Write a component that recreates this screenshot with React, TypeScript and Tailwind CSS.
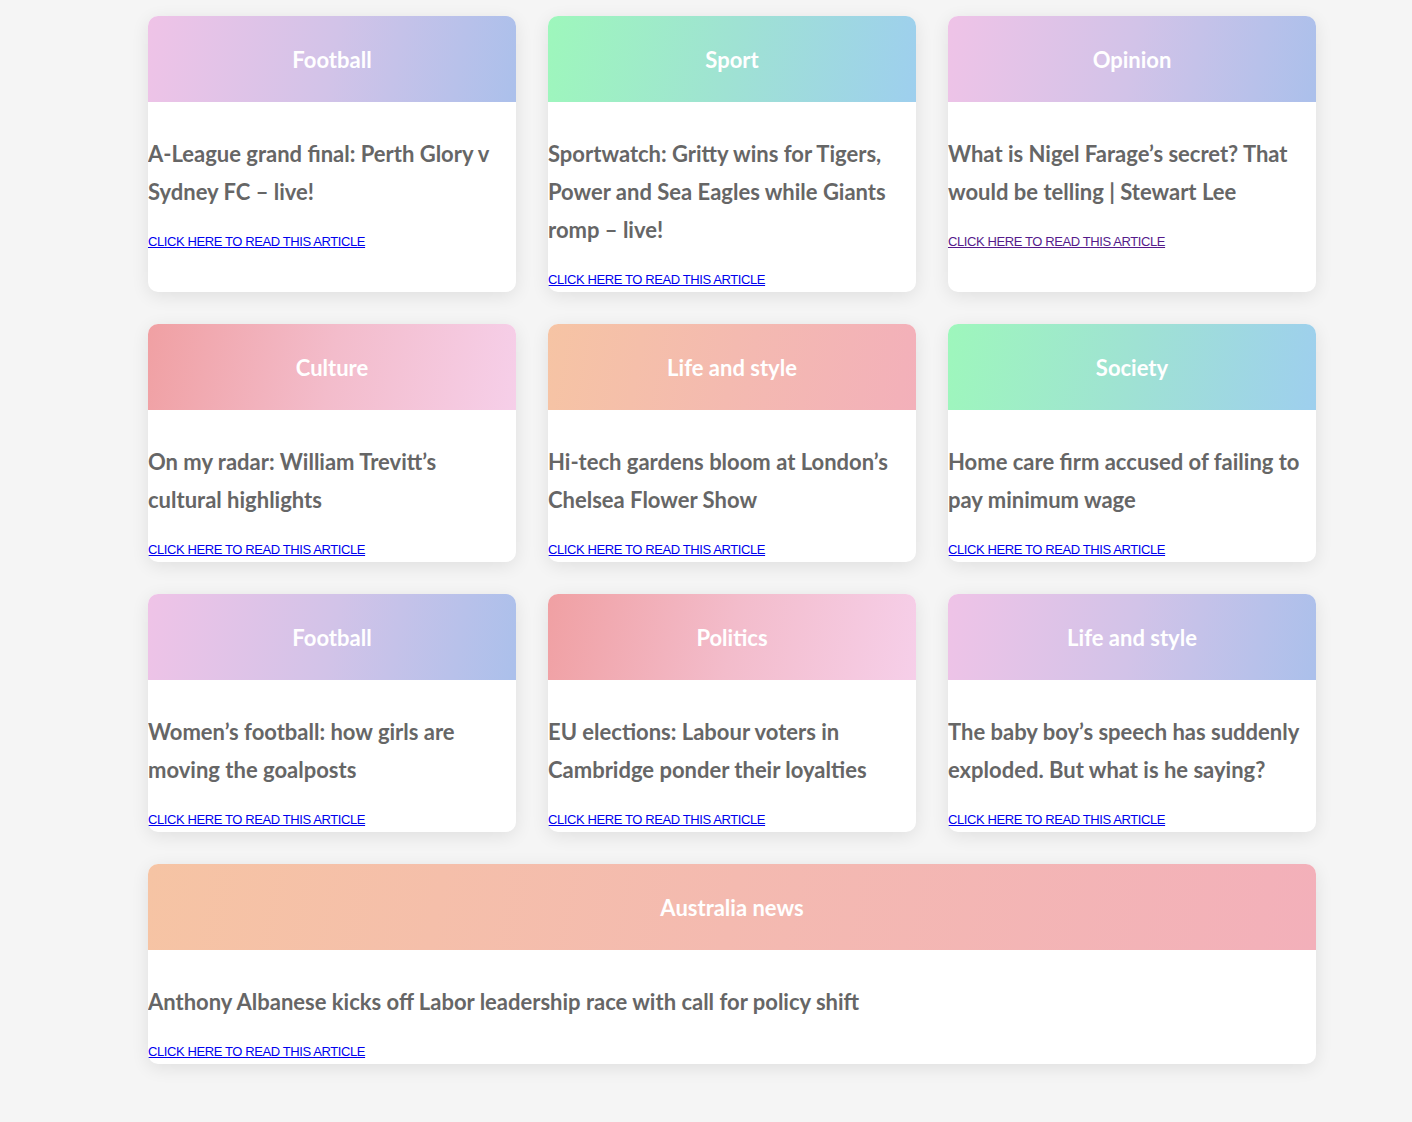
import React from 'react';

type Article = {
  section: string;
  title: string;
  gradient: string;
  visited?: boolean;
  wide?: boolean;
};

const pinkBlue = 'bg-[linear-gradient(100deg,#efc3e7_0%,#d2c3e8_50%,#abc0eb_100%)]';
const greenBlue = 'bg-[linear-gradient(100deg,#9ef7bc_0%,#9fe2d3_50%,#9ecfee_100%)]';
const redPink = 'bg-[linear-gradient(100deg,#f0a0a3_0%,#f3bccb_50%,#f6cfe9_100%)]';
const peachPink = 'bg-[linear-gradient(100deg,#f6c4a4_0%,#f4bab0_50%,#f3b0ba_100%)]';

const articles: Article[] = [
  { section: 'Football', title: 'A-League grand final: Perth Glory v Sydney FC – live!', gradient: pinkBlue },
  {
    section: 'Sport',
    title: 'Sportwatch: Gritty wins for Tigers, Power and Sea Eagles while Giants romp – live!',
    gradient: greenBlue,
  },
  {
    section: 'Opinion',
    title: 'What is Nigel Farage’s secret? That would be telling | Stewart Lee',
    gradient: pinkBlue,
    visited: true,
  },
  { section: 'Culture', title: 'On my radar: William Trevitt’s cultural highlights', gradient: redPink },
  { section: 'Life and style', title: 'Hi-tech gardens bloom at London’s Chelsea Flower Show', gradient: peachPink },
  { section: 'Society', title: 'Home care firm accused of failing to pay minimum wage', gradient: greenBlue },
  { section: 'Football', title: 'Women’s football: how girls are moving the goalposts', gradient: pinkBlue },
  { section: 'Politics', title: 'EU elections: Labour voters in Cambridge ponder their loyalties', gradient: redPink },
  {
    section: 'Life and style',
    title: 'The baby boy’s speech has suddenly exploded. But what is he saying?',
    gradient: pinkBlue,
  },
  {
    section: 'Australia news',
    title: 'Anthony Albanese kicks off Labor leadership race with call for policy shift',
    gradient: peachPink,
    wide: true,
  },
];

function Card({ article }: { article: Article }) {
  return (
    <div
      className={`flex flex-col overflow-hidden rounded-[10px] bg-white pb-[3px] shadow-[0_4px_18px_rgba(0,0,0,0.09)] ${
        article.wide ? 'col-span-3' : ''
      }`}
    >
      <div className={`flex h-[86px] shrink-0 items-center justify-center ${article.gradient}`}>
        <span className="text-[22px] font-bold text-white">{article.section}</span>
      </div>
      <h3 className="mt-[33px] pr-3 text-[22px] font-bold leading-[38px] text-[#666666]">
        {article.title}
      </h3>
      <a
        href="#"
        className={`mt-[22px] block w-fit font-['Liberation_Sans',sans-serif] text-[13px] uppercase leading-[18px] tracking-[-0.4px] underline ${
          article.visited ? 'text-[#551a8b]' : 'text-[#0000ee]'
        }`}
      >
        Click here to read this article
      </a>
    </div>
  );
}

export default function App() {
  return (
    <div className="min-h-[1122px] bg-[#f5f5f5] pl-[148px] pt-4 pb-[58px] font-['Lato',sans-serif]">
      <div className="grid w-[1168px] grid-cols-3 gap-8">
        {articles.map((a, i) => (
          <Card key={i} article={a} />
        ))}
      </div>
    </div>
  );
}
